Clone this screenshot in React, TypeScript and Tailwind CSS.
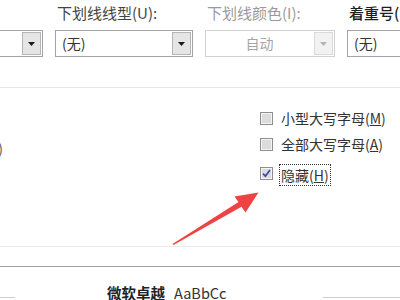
import React from "react";

const font = { fontFamily: '"Noto Sans CJK SC", "Noto Sans", sans-serif' };

function Arrow({ disabled }: { disabled?: boolean }) {
  return (
    <svg width="7" height="4" viewBox="0 0 7 4">
      <polygon points="0,0 7,0 3.5,4" fill={disabled ? "#b4b4b4" : "#1a1a1a"} />
    </svg>
  );
}

function Select({ value, disabled, center }: { value?: string; disabled?: boolean; center?: boolean }) {
  return (
    <div
      className={`flex h-[27px] border bg-white ${disabled ? "border-[#d2d2d2]" : "border-[#a3a3a3]"}`}
    >
      <div
        className={`flex flex-1 items-center text-[14px] ${center ? "justify-center" : "pl-[6px]"} ${
          disabled ? "text-[#a6a6a6]" : "text-[#333]"
        }`}
      >
        {value}
      </div>
      <div
        className={`m-[1px] flex w-[19px] items-center justify-center border ${
          disabled ? "border-[#dadada] bg-[#f2f2f2]" : "border-[#b5b5b5] bg-[#e5e5e5]"
        }`}
      >
        <Arrow disabled={disabled} />
      </div>
    </div>
  );
}

function Field({
  label,
  width,
  className = "",
  labelClass = "text-[#444]",
  children,
}: {
  label: string;
  width: string;
  className?: string;
  labelClass?: string;
  children: React.ReactNode;
}) {
  return (
    <div className={`flex shrink-0 flex-col ${width} ${className}`}>
      <div className={`mb-[8px] h-[18px] whitespace-nowrap pl-[2px] text-[15px] leading-[18px] ${labelClass}`}>
        {label}
      </div>
      {children}
    </div>
  );
}

function Box({ checked }: { checked?: boolean }) {
  return (
    <div className="flex h-[13px] w-[13px] shrink-0 items-center justify-center border border-[#8e8e8e] bg-[#e4e4e4]">
      <div className="flex h-[11px] w-[11px] items-center justify-center border border-[#f4f4f4] bg-[#dcdcdc]">
        {checked && (
          <svg width="9" height="9" viewBox="0 0 9 9">
            <path d="M1 4.6 L3.4 7.2 L8 1" fill="none" stroke="#3a4cb0" strokeWidth="1.8" />
          </svg>
        )}
      </div>
    </div>
  );
}

export default function App() {
  return (
    <div className="relative h-[300px] w-[400px] overflow-hidden bg-white" style={font}>
      {/* top selects */}
      <div className="flex gap-[12px] pt-[4px]">
        <Field label="" width="w-[143px]" className="ml-[-100px]">
          <Select />
        </Field>
        <Field label="下划线线型(U):" width="w-[138px]">
          <Select value="(无)" />
        </Field>
        <Field label="下划线颜色(I):" width="w-[130px]" labelClass="text-[#9a9a9a]">
          <Select value="自动" disabled center />
        </Field>
        <Field label="着重号(·):" width="w-[130px]" labelClass="text-[#1f1f1f] font-medium">
          <Select value="(无)" />
        </Field>
      </div>

      <div className="mt-[30px] h-px bg-[#e4e4e4]" />

      {/* effects */}
      <div className="flex pt-[17px] text-[14px] text-[#333]">
        <div className="ml-[-60px] flex w-[63px] shrink-0 flex-col">
          <div className="h-[26px]" />
          <div className="flex h-[26px] items-center justify-end pt-[8px] text-[#555]">
            上标(P)
          </div>
        </div>
        <div className="ml-[257px] flex flex-col">
          <div className="flex h-[26px] items-center gap-[8px] whitespace-nowrap">
            <Box />
            <span>
              小型大写字母(<span className="underline">M</span>)
            </span>
          </div>
          <div className="flex h-[26px] items-center gap-[8px] whitespace-nowrap">
            <Box />
            <span>
              全部大写字母(<span className="underline">A</span>)
            </span>
          </div>
          <div className="mt-[3px] flex h-[26px] items-center gap-[6px] whitespace-nowrap">
            <Box checked />
            <span className="mt-[4px] border border-dotted border-[#333] px-[1px] leading-[20px]">
              隐藏(<span className="underline">H</span>)
            </span>
          </div>
        </div>
      </div>

      <div className="mt-[60px] h-px bg-[#ebebeb]" />
      <div className="mt-[19px] h-px bg-[#a2a2a2]" />

      {/* preview */}
      <div className="mt-[16px] flex items-start">
        <div className="mt-[14px] h-px w-[15px] shrink-0 bg-[#cfcfcf]" />
        <div className="ml-[92px] flex items-center whitespace-nowrap text-[14.5px] leading-[20px] text-[#222]">
          <span className="font-bold">微软卓越</span>
          <span className="ml-[9px] text-[#333]">AaBbCc</span>
        </div>
        <div className="ml-auto mt-[14px] h-px w-[77px] shrink-0 bg-[#cfcfcf]" />
      </div>

      {/* annotation arrow */}
      <svg className="pointer-events-none absolute left-0 top-0" width="400" height="300" viewBox="0 0 400 300">
        <polygon
          points="172.5,244 238.5,202 234.5,196.5 258.5,192.5 245.5,212.5 241.5,206.8 173.5,245"
          fill="#ee4343"
        />
      </svg>
    </div>
  );
}
